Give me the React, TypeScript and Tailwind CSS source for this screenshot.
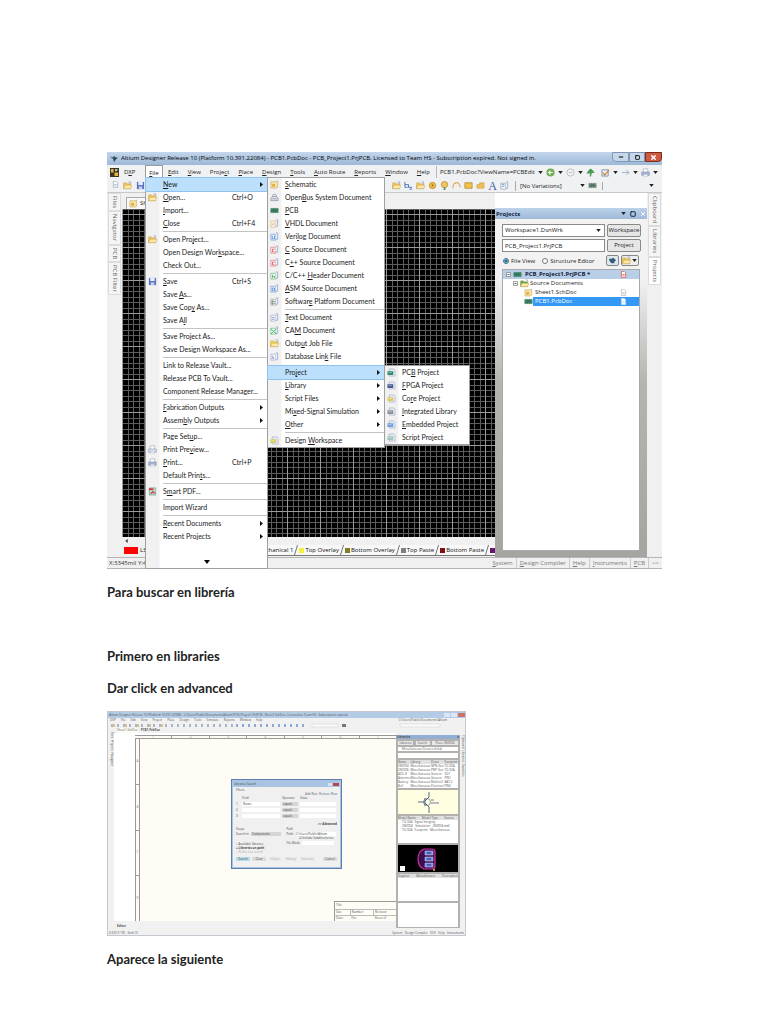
import type { ReactNode } from 'react';
import { Minus, Square, X } from 'lucide-react';

interface MenuEntry {
    label: string;
    icon?: ReactNode;
    shortcut?: string;
    submenu?: boolean;
    active?: boolean;
}

type MenuItem = MenuEntry | 'line' | 'space';

// "&" marks the access key, which is drawn underlined
function Label({ text }: { text: string }) {
    const at = text.indexOf('&');
    if (at < 0) {
        return <>{text}</>;
    }
    return (
        <>
            {text.slice(0, at)}
            <u>{text[at + 1]}</u>
            {text.slice(at + 2)}
        </>
    );
}

function PageIcon({ color, mark = 'M3 4v4M5 4v4' }: { color: string; mark?: string }) {
    return (
        <svg viewBox="0 0 10 10" className="h-[9px] w-[9px] shrink-0" fill="none">
            <path d="M1 2.5h5.5v6.5H1z" fill="#f6f9ff" stroke={color} strokeWidth="0.6" />
            <path d="M6.5 1h2v7h-2" fill="#e8edf6" stroke="#8fa0c0" strokeWidth="0.8" />
            <path d={mark} stroke={color} strokeWidth="0.9" />
        </svg>
    );
}

function FileIcon({ color }: { color: string }) {
    return (
        <svg viewBox="0 0 10 10" className="h-[7px] w-[7px] shrink-0">
            <path d="M2 0.5h4l2 2v7H2z" fill="#fff" stroke={color} />
            <path d="M3.5 5h3M3.5 7h3" stroke={color} />
        </svg>
    );
}

function FolderIcon({ color = '#f3c65a' }: { color?: string }) {
    return (
        <svg viewBox="0 0 10 10" className="h-[9px] w-[9px] shrink-0">
            <path d="M0.5 3V8.5H8.5V3H4.5L3.5 2H1Z" fill={color} stroke="#b08a3a" strokeWidth="0.4" />
            <path d="M0.5 8.5 2.2 4.6H9.8L8.5 8.5Z" fill="#fde9a9" stroke="#b08a3a" strokeWidth="0.4" />
            <path d="M6 1h2.5v2" stroke="#7d97b8" strokeWidth="0.7" fill="none" />
        </svg>
    );
}

function SheetIcon() {
    return (
        <svg viewBox="0 0 10 10" className="h-[9px] w-[9px] shrink-0">
            <path d="M1 2h5.5L8.5 1v7L6.5 9H1z" fill="#f7e2a0" stroke="#a9955a" strokeWidth="0.5" />
            <path d="M2.5 7.5V4.5h3v3z" fill="#e3a93a" />
        </svg>
    );
}

function ChipIcon({ color = '#3f8f6a' }: { color?: string }) {
    return (
        <svg viewBox="0 0 10 10" className="h-[9px] w-[9px] shrink-0">
            <path d="M0.5 2.5h9v5h-9z" fill={color} />
            <path d="M2 2v6M4 2v6M6 2v6M8 2v6" stroke="#1f5a45" strokeWidth="0.4" />
            <path d="M2.5 4h5v1.8h-5z" fill="#3c6b58" />
        </svg>
    );
}

function ProjectIcon({ color }: { color: string }) {
    return (
        <svg viewBox="0 0 10 10" className="h-[9px] w-[9px] shrink-0">
            <path d="M2.5 1h5l1.5 1.5V9h-6.5z" fill="#e4ebf5" stroke="#93a3bd" strokeWidth="0.6" />
            <path d="M0.5 3.6h6.4v4.2H0.5z" fill={color} />
            <path d="M1.5 5.2h3.6" stroke="#fff" strokeWidth="0.5" />
        </svg>
    );
}

function SaveIcon() {
    return (
        <svg viewBox="0 0 10 10" className="h-[9px] w-[9px] shrink-0">
            <path d="M1 1h8v8H1z" fill="#5a6fc0" />
            <path d="M2.5 1h5v3.5h-5z" fill="#e8edff" />
            <path d="M3 6h4v3H3z" fill="#c6cfee" />
        </svg>
    );
}

function PrinterIcon({ preview = false }: { preview?: boolean }) {
    return (
        <svg viewBox="0 0 10 10" className="h-[9px] w-[9px] shrink-0">
            <path d="M2.5 1h5v4h-5z" fill="#fff" stroke="#8d9bb4" strokeWidth="0.6" />
            <path d="M0.8 4.5h8.4v3.6H0.8z" fill={preview ? '#e4e7ee' : '#a9b7d8'} stroke="#7384a8" strokeWidth="0.6" />
            <path d="M2.5 7h5v2h-5z" fill="#fff" stroke="#7384a8" strokeWidth="0.4" />
        </svg>
    );
}

function PdfIcon() {
    return (
        <svg viewBox="0 0 10 10" className="h-[9px] w-[9px] shrink-0">
            <path d="M1.5 1h7v8h-7z" fill="#bfe0d8" stroke="#4b8f85" strokeWidth="0.6" />
            <path d="M1 1.5h5v2H1z" fill="#d6302c" />
            <path d="M3 8 5.5 4.5 8 7.5M3 6.5h4" stroke="#d6302c" strokeWidth="1" fill="none" />
        </svg>
    );
}

function BusIcon() {
    return (
        <svg viewBox="0 0 10 10" className="h-[9px] w-[9px] shrink-0" fill="none" stroke="#8a94a3" strokeWidth="0.9">
            <path d="M1 8.5V6.5L2.5 4H7.5L9 6.5V8.5Z" fill="#e6eaf0" />
            <path d="M3 4V2.5C3 1 7 1 7 2.5V4M2.5 6.5h5" />
        </svg>
    );
}

function Caret() {
    return (
        <svg viewBox="0 0 6 4" className="h-[3px] w-[5px] shrink-0">
            <path d="M0 0h6L3 4z" fill="#222" />
        </svg>
    );
}

const fileMenu: MenuItem[] = [
    { label: '&New', submenu: true, active: true },
    { label: '&Open...', shortcut: 'Ctrl+O', icon: <FolderIcon /> },
    { label: '&Import...' },
    { label: '&Close', shortcut: 'Ctrl+F4' },
    'line',
    { label: 'Open Pro&ject...', icon: <FolderIcon /> },
    { label: 'Open Design Wor&kspace...' },
    { label: 'Check Out...' },
    'line',
    { label: '&Save', shortcut: 'Ctrl+S', icon: <SaveIcon /> },
    { label: 'Save &As...' },
    { label: 'Save Cop&y As...' },
    { label: 'Save A&ll' },
    'line',
    { label: 'Save Project As...' },
    { label: 'Save Design Workspace As...' },
    'line',
    { label: 'Link to Release Vault...' },
    { label: 'Release PCB To Vault...' },
    { label: 'Component Release Manager...' },
    'line',
    { label: '&Fabrication Outputs', submenu: true },
    { label: 'Assem&bly Outputs', submenu: true },
    'line',
    { label: 'Page Set&up...' },
    { label: 'Print Pre&view...', icon: <PrinterIcon preview /> },
    { label: '&Print...', shortcut: 'Ctrl+P', icon: <PrinterIcon /> },
    { label: 'Default Prin&ts...' },
    'line',
    { label: 'S&mart PDF...', icon: <PdfIcon /> },
    'line',
    { label: 'Import Wizard' },
    'line',
    { label: '&Recent Documents', submenu: true },
    { label: 'Recent Projects', submenu: true },
];

const newMenu: MenuItem[] = [
    { label: '&Schematic', icon: <SheetIcon /> },
    { label: 'Open&Bus System Document', icon: <BusIcon /> },
    { label: '&PCB', icon: <ChipIcon /> },
    { label: '&VHDL Document', icon: <PageIcon color="#dfa352" mark="M2.5 7V5M4.5 7V4" /> },
    { label: 'Veri&log Document', icon: <PageIcon color="#3f83d0" mark="M2.5 4v3.5h2.5V4" /> },
    { label: '&C Source Document', icon: <PageIcon color="#e04a48" mark="M5 4.5H2.8V7.5H5" /> },
    { label: 'C&++ Source Document', icon: <PageIcon color="#e04a48" mark="M5 4.5H2.8V7.5H5" /> },
    { label: 'C/C++ &Header Document', icon: <PageIcon color="#4fae5c" mark="M2.8 4v4M5 6v2M2.8 6H5" /> },
    { label: '&ASM Source Document', icon: <PageIcon color="#4c7fd0" mark="M2.5 4.5H5V7.5H2.5Z" /> },
    { label: 'Softwar&e Platform Document', icon: <PageIcon color="#7d8f80" mark="M1 5h5M1 7h5M3 3v6" /> },
    'line',
    { label: '&Text Document', icon: <PageIcon color="#8793b8" mark="M2 5h3M2 7h3" /> },
    { label: 'CA&M Document', icon: <PageIcon color="#35b04e" mark="M1 3l6 6M7 3L1 9" /> },
    { label: 'Outp&ut Job File', icon: <FolderIcon color="#e9dc4e" /> },
    { label: 'Database Lin&k File', icon: <PageIcon color="#8f9bc4" mark="M2.5 4v4M4 5v3" /> },
    'space',
    { label: 'Pro&ject', submenu: true, active: true },
    { label: '&Library', submenu: true },
    { label: 'Script Files', submenu: true },
    { label: 'Mi&xed-Signal Simulation', submenu: true },
    { label: '&Other', submenu: true },
    'line',
    { label: 'Design &Workspace', icon: <ProjectIcon color="#d7cf5a" /> },
];

const projectMenu: MenuItem[] = [
    { label: 'PC&B Project', icon: <ProjectIcon color="#2f8a63" /> },
    { label: '&FPGA Project', icon: <ProjectIcon color="#46598c" /> },
    { label: 'Co&re Project', icon: <ProjectIcon color="#e2c75a" /> },
    { label: '&Integrated Library', icon: <ProjectIcon color="#8b8f99" /> },
    { label: '&Embedded Project', icon: <ProjectIcon color="#6f9ee0" /> },
    { label: 'Script Project', icon: <ProjectIcon color="#9cc7b4" /> },
];

function Menu({ items, className }: { items: MenuItem[]; className: string }) {
    return (
        <div
            className={`absolute border border-[#a0a0a0] bg-white bg-[linear-gradient(90deg,#f1f1f1_13px,#fff_14px)] font-[Lato,sans-serif] text-[7px] ${className}`}
        >
            {items.map((item, i) => {
                if (item === 'line') {
                    return <div key={i} className="my-px ml-[17px] h-px bg-[#c4c4c4]" />;
                }
                if (item === 'space') {
                    return <div key={i} className="h-[3px]" />;
                }
                return (
                    <button
                        key={i}
                        type="button"
                        className={`flex h-[13px] w-full items-center text-left leading-[13px] whitespace-nowrap text-[#1a1a1a] ${
                            item.active ? 'bg-[#bcdffb] outline outline-[#8fc3ee]' : ''
                        }`}
                    >
                        <span className="flex w-[17px] shrink-0 items-center pl-[2px]">{item.icon}</span>
                        <span>
                            <Label text={item.label} />
                        </span>
                        {item.shortcut && <span className="ml-auto w-[35px]">{item.shortcut}</span>}
                        {item.submenu && (
                            <svg viewBox="0 0 3 5" className="mr-[4px] ml-auto h-[5px] w-[3px]">
                                <path d="M0 0v5L3 2.5z" fill="#111" />
                            </svg>
                        )}
                    </button>
                );
            })}
        </div>
    );
}

const menuBar = ['&Edit', '&View', 'Proje&ct', '&Place', '&Design', '&Tools', '&Auto Route', '&Reports', '&Window', '&Help'];

function MenuBar() {
    return (
        <div className="flex h-[14px] items-center bg-[#f0f1f3] pl-[3px] leading-[12px] whitespace-nowrap text-[#222]">
            <svg viewBox="0 0 10 10" className="h-[9px] w-[9px] shrink-0">
                <path d="M0 0h10v10H0z" fill="#3a3424" />
                <path d="M1 1h3v4H1zM5 5h4v4H5z" fill="#e5b53c" />
                <path d="M6 1l3 1-3 2z" fill="#fff" />
            </svg>
            <button type="button" className="ml-[5px] w-[14px] shrink-0 text-left">
                D<u>X</u>P
            </button>
            <button type="button" className="ml-[7px] h-[14px] w-[18px] shrink-0 border border-b-0 border-[#9a9a9a] bg-white text-center">
                <u>F</u>ile
            </button>
            <div className="ml-[5px] flex shrink-0 gap-[9px]">
                {menuBar.map((item) => (
                    <button key={item} type="button">
                        <Label text={item} />
                    </button>
                ))}
            </div>
            <div className="ml-auto flex items-center gap-[3px] pr-[4px]">
                <span className="border-l border-[#bbb] pl-[3px]">PCB1.PcbDoc?ViewName=PCBEdit</span>
                <Caret />
                <svg viewBox="0 0 10 10" className="h-[9px] w-[9px] shrink-0">
                    <circle cx="5" cy="5" r="4.5" fill="#6fae55" />
                    <path d="M7.5 5H3M5 3 3 5l2 2" stroke="#fff" strokeWidth="1.2" fill="none" />
                </svg>
                <Caret />
                <svg viewBox="0 0 10 10" className="h-[9px] w-[9px] shrink-0">
                    <circle cx="5" cy="5" r="4" fill="#f4f4f4" stroke="#b7bcc2" />
                    <path d="M3 5h4" stroke="#b7bcc2" />
                </svg>
                <Caret />
                <svg viewBox="0 0 10 10" className="h-[9px] w-[9px] shrink-0">
                    <path d="M5 0.5 8 3l1.5 2.5H6.5L5.5 9.5H4L4.5 6H0.5L2.5 3Z" fill="#4c9a55" />
                </svg>
                <svg viewBox="0 0 10 10" className="ml-[3px] h-[9px] w-[9px] shrink-0">
                    <path d="M1 2h7v7H1z" fill="#e6edf5" stroke="#8095ae" />
                    <path d="M2 5l2 3 5-6" stroke="#cf7a32" strokeWidth="1.2" fill="none" />
                </svg>
                <Caret />
                <svg viewBox="0 0 10 10" className="h-[9px] w-[9px] shrink-0">
                    <path d="M1 5h8M6 2.5l3 2.5-3 2.5" stroke="#9fb0c8" fill="none" />
                </svg>
                <Caret />
                <PrinterIcon />
                <Caret />
            </div>
        </div>
    );
}

function ToolBar() {
    return (
        <div className="flex h-[14px] items-center border-b border-[#c9c9c9] bg-[#f0f1f3] leading-[12px]">
            <div className="flex gap-[4px] pl-[5px]">
                <FileIcon color="#9aa5b8" />
                <FolderIcon />
                <SaveIcon />
            </div>
            <div className="ml-auto flex items-center gap-[3px] pr-[8px] text-[#222]">
                <FolderIcon />
                <svg viewBox="0 0 10 10" className="h-[9px] w-[9px]" fill="none" stroke="#3f6fb5">
                    <path d="M1 1v3h4v3h4M1 4v3h3M6 9h3" />
                </svg>
                <FolderIcon />
                <svg viewBox="0 0 10 10" className="h-[9px] w-[9px]">
                    <circle cx="5" cy="5" r="3.5" fill="#eebf47" stroke="#c39127" />
                    <circle cx="5" cy="5" r="1" fill="#8a6a28" />
                </svg>
                <svg viewBox="0 0 10 10" className="h-[9px] w-[9px]">
                    <circle cx="5" cy="4" r="3.5" fill="#f1c75a" stroke="#b9933f" />
                    <path d="M4 7h2v3H4z" fill="#5f9866" />
                </svg>
                <svg viewBox="0 0 10 10" className="h-[9px] w-[9px]" fill="none" stroke="#e3aa62">
                    <path d="M1 8C1 0 9 0 9 7" strokeWidth="1.3" />
                </svg>
                <svg viewBox="0 0 10 10" className="h-[9px] w-[9px]">
                    <path d="M1 2h8v6H1z" fill="#f3c34a" stroke="#b99136" />
                </svg>
                <svg viewBox="0 0 10 10" className="h-[9px] w-[9px]">
                    <path d="M1 4h3V2h5v6H1z" fill="#f0bf55" stroke="#b99136" strokeWidth="0.5" />
                </svg>
                <span className="font-['Liberation_Serif',serif] text-[12px] text-[#3f5f9c]">A</span>
                <PageIcon color="#7487a8" mark="M2 4h3M2 6h3" />
                <select
                    aria-label="Variant"
                    className="ml-[3px] w-[62px] appearance-none border-l border-[#aaa] bg-transparent pl-[4px] leading-[10px]"
                >
                    <option>[No Variations]</option>
                </select>
                <Caret />
                <ChipIcon color="#8b9488" />
                <span className="ml-[2px] h-[8px] w-[44px] border-l border-[#aaa]" />
                <Caret />
            </div>
        </div>
    );
}

function TitleBar() {
    return (
        <header className="flex h-[13px] items-center bg-[linear-gradient(#c3d6ec,#9db8d6)] pl-[3px] leading-[13px] text-black">
            <svg viewBox="0 0 10 10" className="mr-[3px] h-[8px] w-[8px] shrink-0">
                <path d="M0 2 4 3 5 1 7 3 10 3 7 6 5 9 4 5Z" fill="#2b4a55" />
            </svg>
            <h1 className="min-w-0 flex-1 truncate">
                Altium Designer Release 10 (Platform 10.391.22084) - PCB1.PcbDoc - PCB_Project1.PrjPCB. Licensed to Team HS - Subscription
                expired. Not signed in.
            </h1>
            <div className="flex h-[10px] self-start">
                <button type="button" aria-label="Minimize" className="grid w-[17px] place-items-center rounded-bl border border-[#7f96b4] bg-[#c6d7ea]">
                    <Minus className="h-[6px] w-[6px]" strokeWidth={4} />
                </button>
                <button type="button" aria-label="Restore" className="grid w-[16px] place-items-center border border-[#7f96b4] bg-[#c6d7ea]">
                    <Square className="h-[5px] w-[5px]" strokeWidth={4} />
                </button>
                <button type="button" aria-label="Close" className="grid w-[17px] place-items-center rounded-br border border-[#7b2a1e] bg-[#cf5a43] text-white">
                    <X className="h-[7px] w-[7px]" strokeWidth={5} />
                </button>
            </div>
        </header>
    );
}

function SideTabs({ tabs, active }: { tabs: string[]; active?: string }) {
    return (
        <div className="flex w-[15px] shrink-0 flex-col items-center bg-[#f0f0f0] leading-[11px] text-[#666]">
            {tabs.map((tab) => (
                <button
                    key={tab}
                    type="button"
                    className={`border border-[#dcdcdc] pt-[2px] pb-[2px] [writing-mode:vertical-rl] ${tab === active ? 'bg-white' : 'bg-[#f5f5f5]'}`}
                >
                    {tab}
                </button>
            ))}
        </div>
    );
}

function PcbCanvas() {
    return (
        <svg className="block h-[328px] w-full bg-black" role="img" aria-label="PCB grid">
            <defs>
                <pattern id="pcb-grid" x="0" y="5" width="33" height="33" patternUnits="userSpaceOnUse">
                    <path d="M6.5 0v33M11.5 0v33M17.5 0v33M22.5 0v33M28.5 0v33" stroke="#5c5c5c" />
                    <path d="M0 6.5h33M0 11.5h33M0 17.5h33M0 22.5h33M0 28.5h33" stroke="#5c5c5c" />
                    <path d="M0.5 0v33M0 0.5h33" stroke="#9a9a9a" />
                </pattern>
            </defs>
            <rect width="100%" height="100%" fill="url(#pcb-grid)" />
        </svg>
    );
}

function LayerTab({ color, name }: { color: string; name: string }) {
    return (
        <button type="button" className="flex items-center gap-px border-b border-[#777] bg-[#f8f8f8] pl-px">
            <svg viewBox="0 0 5 5" className="h-[5px] w-[5px]">
                <path d="M0 0h5v5H0z" fill={color} />
            </svg>
            {name}
            {name && (
                <svg viewBox="0 0 4 10" className="h-[10px] w-[4px]">
                    <path d="M0.5 10 3.5 0" stroke="#555" strokeWidth="0.8" />
                </svg>
            )}
        </button>
    );
}

function Workarea() {
    return (
        <main className="min-w-0 flex-1 bg-[#f0f0f0]">
            <div className="flex h-[16px] items-end pl-[4px] leading-[11px]">
                <button type="button" className="flex items-center gap-[2px] border border-b-0 border-[#aaa] bg-[#f8f8f8] px-[2px]">
                    <SheetIcon />
                    Sh
                </button>
            </div>
            <PcbCanvas />
            <div className="flex h-[8px] items-center pl-[3px]">
                <svg viewBox="0 0 3 5" className="h-[4px] w-[3px]">
                    <path d="M3 0v5L0 2.5z" fill="#333" />
                </svg>
            </div>
            <div className="flex h-[12px] items-stretch pb-px pl-[2px] leading-[10px] whitespace-nowrap text-[#111]">
                <span className="my-[2px] w-[14px] bg-[#f00]" />
                <span className="pl-[2px]">LS</span>
                <div className="ml-auto flex">
                    <LayerTab color="#c8a" name="Mechanical 1" />
                    <LayerTab color="#f3ef3b" name="Top Overlay" />
                    <LayerTab color="#808022" name="Bottom Overlay" />
                    <LayerTab color="#808080" name="Top Paste" />
                    <LayerTab color="#800f14" name="Bottom Paste" />
                    <LayerTab color="#6a1670" name="" />
                </div>
            </div>
        </main>
    );
}

function TreeToggle() {
    return (
        <svg viewBox="0 0 5 5" className="mr-[2px] h-[5px] w-[5px] shrink-0">
            <path d="M0.5 0.5h4v4h-4z" fill="#fff" stroke="#777" strokeWidth="0.7" />
            <path d="M1.5 2.5h2" stroke="#222" strokeWidth="0.7" />
        </svg>
    );
}

function ProjectsPanel() {
    return (
        <aside className="mt-[15px] flex w-[152px] shrink-0 flex-col bg-[linear-gradient(#f2f2f2_20%,#b5b4b0_50%,#a5a4a0)] text-[#222]">
            <header className="flex h-[11px] items-center justify-between bg-[linear-gradient(#bdd2ea,#9fb9d8)] px-px font-bold text-[#16284a]">
                Projects
                <span className="flex items-center gap-[4px]">
                    <Caret />
                    <Square className="h-[6px] w-[6px]" strokeWidth={4} />
                    <X className="h-[6px] w-[6px] text-white" strokeWidth={4} />
                </span>
            </header>
            <div className="grid grid-cols-[103px_34px] gap-x-[2px] gap-y-[2px] px-[7px] pt-[5px] leading-[11px]">
                <div className="flex items-center border border-[#8a8a8a] bg-white pr-[3px]">
                    <select aria-label="Workspace" className="h-[11px] min-w-0 flex-1 appearance-none pl-[2px]">
                        <option>Workspace1.DsnWrk</option>
                    </select>
                    <Caret />
                </div>
                <button type="button" className="h-[13px] rounded-[2px] border border-[#888] bg-[#e6e6e6] text-center">
                    Workspace
                </button>
                <input aria-label="Project" defaultValue="PCB_Project1.PrjPCB" className="h-[13px] min-w-0 border border-[#8a8a8a] bg-white pl-[2px]" />
                <button type="button" className="h-[13px] rounded-[2px] border border-[#888] bg-[#e6e6e6] text-center">
                    Project
                </button>
            </div>
            <div className="flex h-[17px] items-center gap-[7px] px-[8px]">
                <label className="flex items-center gap-[2px]">
                    <input type="radio" name="view" defaultChecked className="h-[6px] w-[6px] accent-[#2c6f8c]" />
                    File View
                </label>
                <label className="flex items-center gap-[2px]">
                    <input type="radio" name="view" className="h-[6px] w-[6px]" />
                    Structure Editor
                </label>
                <div className="ml-auto flex gap-[2px]">
                    <button type="button" aria-label="Refresh" className="grid h-[11px] w-[13px] place-items-center rounded-[2px] border border-[#888] bg-[#dfe8ee]">
                        <svg viewBox="0 0 10 10" className="h-[9px] w-[9px]">
                            <path d="M1 3h3l2-1 3 3-2 1v2H4L2 6z" fill="#2d5d78" />
                        </svg>
                    </button>
                    <button type="button" aria-label="Options" className="flex h-[11px] w-[18px] items-center gap-px rounded-[2px] border border-[#888] bg-[#eee]">
                        <FolderIcon />
                        <Caret />
                    </button>
                </div>
            </div>
            <ul className="mx-[7px] mb-[6px] flex-1 border border-[#aaa] bg-white leading-[9px]">
                <li className="flex items-center bg-[#b9cfe8] pl-[3px] font-bold text-[#12203c]">
                    <TreeToggle />
                    <ChipIcon />
                    <span className="pl-[3px]">PCB_Project1.PrjPCB *</span>
                    <span className="mr-[12px] ml-auto">
                        <FileIcon color="#d8403c" />
                    </span>
                </li>
                <li className="flex items-center pl-[10px]">
                    <TreeToggle />
                    <FolderIcon color="#5fae4e" />
                    <span className="pl-px">Source Documents</span>
                </li>
                <li className="flex items-center pl-[21px]">
                    <SheetIcon />
                    <span className="pl-[2px]">Sheet1.SchDoc</span>
                    <span className="mr-[12px] ml-auto">
                        <FileIcon color="#b0b6c0" />
                    </span>
                </li>
                <li className="flex items-center bg-[linear-gradient(90deg,#fff_30px,#3399f5_30px)] pl-[21px] text-white">
                    <ChipIcon />
                    <span className="pl-[2px]">PCB1.PcbDoc</span>
                    <span className="mr-[12px] ml-auto">
                        <FileIcon color="#b9d8f8" />
                    </span>
                </li>
            </ul>
        </aside>
    );
}

function StatusBar() {
    return (
        <footer className="flex h-[12px] items-center border-t border-b border-[#b5b5b5] bg-[#f0f0f0] pl-[2px] leading-[10px] text-[#333]">
            <span>X:3345mil Y:4</span>
            <div className="ml-auto flex divide-x divide-[#ccc] text-[#777]">
                {['&System', '&Design Compiler', '&Help', '&Instruments', '&PCB', '>>'].map((item) => (
                    <button key={item} type="button" className="px-[3px]">
                        <Label text={item} />
                    </button>
                ))}
            </div>
        </footer>
    );
}

function AltiumWindow() {
    return (
        <section className="relative font-['Open_Sans',sans-serif] text-[6px]">
            <TitleBar />
            <MenuBar />
            <ToolBar />
            <div className="flex">
                <SideTabs tabs={['Files', 'Navigator', 'PCB', 'PCB Filter']} />
                <Workarea />
                <ProjectsPanel />
                <SideTabs tabs={['Clipboard', 'Libraries', 'Projects']} active="Projects" />
            </div>
            <StatusBar />
            <Menu items={fileMenu} className="top-[25px] bottom-0 left-[38px] w-[123px]" />
            <svg viewBox="0 0 6 4" className="absolute bottom-[5px] left-[97px] h-[4px] w-[6px]">
                <path d="M0 0h6L3 4z" fill="#000" />
            </svg>
            <Menu items={newMenu} className="top-[25px] left-[160px] w-[118px]" />
            <Menu items={projectMenu} className="top-[213px] left-[277px] w-[86px]" />
        </section>
    );
}

function SearchDialog() {
    return (
        <div className="absolute top-[67px] left-[123px] w-[111px] border border-[#5b7fae] bg-[#a9c4e2] p-px leading-[4px] text-[#444]">
            <div className="flex h-[6px] items-center justify-between px-px">
                Libraries Search
                <span className="flex gap-px">
                    <span className="h-[3px] w-[4px] bg-[#d4e2f2]" />
                    <span className="h-[3px] w-[6px] bg-[#b54a48]" />
                </span>
            </div>
            <div className="h-[80px] bg-[#f0f0f0] px-[3px] pt-px">
                <div>Filters</div>
                <div className="text-right text-[#567]">Add Row&nbsp; Remove Row</div>
                <div className="grid grid-cols-[4px_38px_16px_36px] gap-x-[2px] gap-y-[2px]">
                    <span />
                    <span>Field</span>
                    <span>Operator</span>
                    <span>Value</span>
                    {['Name', '', ''].map((field, i) => (
                        <div key={i} className="contents">
                            <span>{i + 1}</span>
                            <span className="bg-white pl-px">{field}</span>
                            <span className="bg-[#d5d5d5] pl-px">equals</span>
                            <span className="bg-white" />
                        </div>
                    ))}
                </div>
                <div className="mt-[4px] text-right font-bold">&gt;&gt; Advanced</div>
                <div className="mt-px grid grid-cols-2">
                    <div>
                        <div>Scope</div>
                        <div className="flex gap-[2px] pt-px">
                            Search in
                            <span className="w-[30px] bg-[#d5d5d5] pl-px">Components</span>
                        </div>
                        <div className="pt-[6px]">○ Available libraries</div>
                        <div className="font-bold">● Libraries on path</div>
                        <div className="text-[#aaa]">○ Refine last search</div>
                    </div>
                    <div>
                        <div>Path</div>
                        <div className="flex gap-[2px] pt-px">
                            Path:
                            <span className="w-[40px] bg-white">C:\Users\Public\Altium</span>
                        </div>
                        <div className="pl-[12px]">☑ Include Subdirectories</div>
                        <div className="flex gap-[2px] pt-px">
                            File Mask:
                            <span className="w-[32px] bg-white" />
                        </div>
                    </div>
                </div>
                <div className="mt-[3px] flex gap-[2px] text-center">
                    <span className="w-[14px] bg-[#b9dcea]">Search</span>
                    <span className="w-[14px] bg-[#dcdcdc]">Clear</span>
                    <span className="w-[14px] bg-[#ececec] text-[#aaa]">Helper</span>
                    <span className="w-[14px] bg-[#ececec] text-[#aaa]">History</span>
                    <span className="w-[15px] bg-[#ececec] text-[#aaa]">Favorites</span>
                    <span className="ml-auto w-[14px] bg-[#dcdcdc]">Cancel</span>
                </div>
            </div>
        </div>
    );
}

const components = [
    ['2N3904', 'Miscellaneous', 'NPN Gen', 'TO-92A'],
    ['2N3906', 'Miscellaneous', 'PNP Gen', 'TO-92A'],
    ['ADC-8', 'Miscellaneous', 'Generic', 'SOT'],
    ['Antenna', 'Miscellaneous', 'Generic', 'PIN1'],
    ['Battery', 'Miscellaneous', 'Multicell', 'BAT-2'],
    ['Bell', 'Miscellaneous', 'Electrical', 'PIN2'],
];

function LibrariesPanel() {
    return (
        <aside className="mt-[7px] mb-[3px] flex w-[64px] shrink-0 flex-col gap-[2px] bg-[#b2b1ad] px-[2px] leading-[4px]">
            <header className="-mx-[2px] flex h-[4px] justify-between bg-[#92afd2] px-px font-bold">
                Libraries <span>x</span>
            </header>
            <div className="flex justify-between text-center">
                <span className="w-[15px] bg-[#e8e8e8]">Libraries</span>
                <span className="w-[14px] bg-[#e8e8e8]">Search</span>
                <span className="w-[26px] bg-[#e8e8e8]">Place 2N3904</span>
            </div>
            <div className="bg-white pl-[4px]">Miscellaneous Devices.IntLib</div>
            <div className="h-[5px] bg-white" />
            <table className="w-full bg-white">
                <thead className="bg-[#e0e0e0]">
                    <tr>
                        {['Name', 'Library', 'Descr', 'Footprint'].map((h) => (
                            <th key={h} className="p-0 text-left font-normal">
                                {h}
                            </th>
                        ))}
                    </tr>
                </thead>
                <tbody>
                    {components.map((row) => (
                        <tr key={row[0]}>
                            {row.map((cell) => (
                                <td key={cell} className="p-0 whitespace-nowrap">
                                    {cell}
                                </td>
                            ))}
                        </tr>
                    ))}
                </tbody>
            </table>
            <svg viewBox="0 0 60 24" className="h-[24px] w-full bg-[#fffee0]" fill="none" stroke="#36447c">
                <path d="M20 12h7M27 8v8M27 11l4-4V2M27 13l4 4v6" strokeWidth="0.8" />
                <circle cx="29" cy="12" r="3.5" strokeWidth="0.5" />
                <path d="M33 10h3M33 13h8" strokeWidth="0.7" />
            </svg>
            <div className="h-[27px] bg-white">
                <div className="flex justify-between bg-[#e0e0e0] pr-[4px]">
                    <span>Model Name</span>
                    <span>Model Type</span>
                    <span>Source</span>
                </div>
                <div className="pl-[4px]">TO-92A &nbsp; Signal Integrity</div>
                <div className="pl-[4px]">2N3904 &nbsp; Simulation &nbsp; 2N3904.mdl</div>
                <div className="pl-[4px]">TO-92A &nbsp; Footprint &nbsp; Miscellaneous</div>
            </div>
            <svg viewBox="0 0 60 27" className="h-[27px] w-full bg-black">
                <path d="M26 4h8q3 0 3 3v14q0 3-3 3h-8C18 21 18 7 26 4Z" fill="#3c0f4c" stroke="#d12fa8" strokeWidth="1.2" />
                <path d="M27 6h8v4h-8zM27 12h8v4h-8zM27 18h8v4h-8z" fill="#7c8ce0" stroke="#c6d0ff" strokeWidth="0.5" />
                <path d="M29 8h4M29 14h4M29 20h4" stroke="#243070" />
                <path d="M2 21h5v5H2z" fill="#fff" />
                <circle cx="36" cy="25" r="0.9" fill="#f2d244" />
            </svg>
            <div className="h-[27px] bg-white">
                <div className="flex justify-between bg-[#e0e0e0]">
                    <span>Supplier</span>
                    <span>Manufacturer</span>
                    <span>Description</span>
                </div>
            </div>
            <div className="mb-px flex-1 bg-white" />
        </aside>
    );
}

function Ruler({ marks, vertical = false }: { marks: string[]; vertical?: boolean }) {
    return (
        <div
            className={`flex shrink-0 divide-[#999] border-[#999] bg-[#fefcf4] leading-[3px] text-[#777] ${
                vertical ? 'w-[5px] flex-col divide-y border-x' : 'h-[4px] divide-x border-y'
            }`}
        >
            {marks.map((m) => (
                <span key={m} className="grid flex-1 place-items-center">
                    {m}
                </span>
            ))}
        </div>
    );
}

function SchematicWindow() {
    return (
        <section className="relative w-[359px] max-w-full border border-[#c3c8cf] bg-[#f1f1f1] font-['Open_Sans',sans-serif] text-[3px] text-[#555]">
            <header className="flex h-[6px] items-center justify-between bg-[#b4cbe5] pl-px leading-[6px]">
                <h2>
                    Altium Designer Release 10 (Platform 10.391.22084) - C:\Users\Public\Documents\Altium\PCB_Project1.PrjPCB - Sheet1.SchDoc.
                    Licensed to Team HS - Subscription expired.
                </h2>
                <span className="flex h-[4px] shrink-0 gap-px">
                    <span className="w-[6px] bg-[#dbe7f4]" />
                    <span className="w-[6px] bg-[#dbe7f4]" />
                    <span className="w-[7px] bg-[#c97466]" />
                </span>
            </header>
            <nav className="flex h-[5px] gap-[5px] pl-[2px] leading-[5px]">
                {['DXP', 'File', 'Edit', 'View', 'Project', 'Place', 'Design', 'Tools', 'Simulate', 'Reports', 'Window', 'Help'].map((item) => (
                    <a key={item} href="#">
                        {item}
                    </a>
                ))}
                <span className="ml-auto pr-[18px]">C:\Users\Public\Documents\Altium</span>
            </nav>
            <svg viewBox="0 0 358 5" preserveAspectRatio="xMinYMid slice" className="block h-[5px] w-full" strokeWidth="3">
                <path d="M3 2.5h125" stroke="#a9b5ca" strokeDasharray="2 4" />
                <path d="M5 2.5h60" stroke="#dcc283" strokeDasharray="2 10" />
                <path d="M128 2.5h70" stroke="#8fa8d4" strokeDasharray="2 4" />
                <path d="M204 1h26v3h-26zM292 1h40v3h-40z" fill="#fafafa" stroke="#ccc" strokeWidth="0.5" />
                <path d="M234 2.5h4" stroke="#777" />
            </svg>
            <div className="flex h-[203px]">
                <div className="w-[6px] shrink-0 pt-[4px] leading-[4px] [writing-mode:vertical-rl]">Files&nbsp; Projects&nbsp; Navigator</div>
                <div className="flex min-w-0 flex-1 flex-col">
                    <div className="flex h-[5px] gap-[3px] pl-[3px] leading-[5px]">
                        <span className="bg-[#fffdf3]">Sheet1.SchDoc</span>
                        <span className="font-bold">PCB1.PcbDoc</span>
                    </div>
                    <div className="flex flex-1 bg-white pt-[2px] pl-[21px]">
                        <div className="flex flex-1 flex-col">
                            <Ruler marks={['1', '2', '3', '4', '5', '6', '7']} />
                            <div className="flex flex-1">
                                <Ruler vertical marks={['A', 'B', 'C', 'D']} />
                                <div className="flex flex-1 items-end justify-end bg-[#fefcf4]">
                                    <table className="w-[62px] border-t border-l border-[#999] leading-[5px]">
                                        <tbody>
                                            <tr className="border-b border-[#bbb]">
                                                <td colSpan={3} className="p-px">
                                                    Title
                                                </td>
                                            </tr>
                                            <tr className="border-b border-[#bbb]">
                                                <td className="px-px">Size</td>
                                                <td className="border-x border-[#bbb] px-px">Number</td>
                                                <td className="px-px">Revision</td>
                                            </tr>
                                            <tr>
                                                <td className="px-px">Date:</td>
                                                <td className="px-px">File:</td>
                                                <td className="px-px">Sheet of</td>
                                            </tr>
                                        </tbody>
                                    </table>
                                </div>
                            </div>
                        </div>
                    </div>
                    <div className="h-[10px] pl-[3px] leading-[10px] font-bold">Editor</div>
                </div>
                <LibrariesPanel />
                <div className="w-[5px] shrink-0 pt-[7px] leading-[4px] [writing-mode:vertical-rl]">Clipboard&nbsp; Libraries&nbsp; Favorites</div>
            </div>
            <footer className="flex h-[4px] justify-between px-px leading-[4px]">
                <span>X:320 Y:190 &nbsp; Grid:10</span>
                <span>System &nbsp; Design Compiler &nbsp; SCH &nbsp; Help &nbsp; Instruments</span>
            </footer>
            <SearchDialog />
        </section>
    );
}

export default function App() {
    return (
        <article className="min-h-screen bg-white pt-[152px] pr-[106px] pl-[107px] font-[Lato,sans-serif] text-[13px] leading-[16px] font-bold text-[#222]">
            <div className="font-normal">
                <AltiumWindow />
            </div>
            <p className="mt-[15px]">Para buscar en librería</p>
            <p className="mt-[48px]">Primero en libraries</p>
            <p className="mt-[16px]">Dar click en advanced</p>
            <div className="mt-[15px] font-normal">
                <SchematicWindow />
            </div>
            <p className="mt-[15px]">Aparece la siguiente</p>
        </article>
    );
}
